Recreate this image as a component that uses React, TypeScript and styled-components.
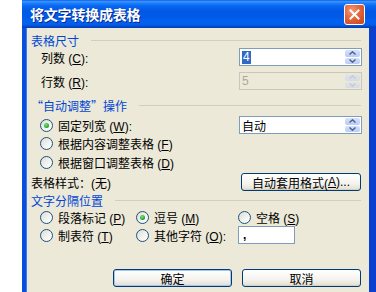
import styled, { createGlobalStyle } from "styled-components";

const GlobalStyle = createGlobalStyle`
  html, body {
    margin: 0;
    padding: 0;
    background: #ffffff;
  }
  body {
    font-family: "Liberation Sans", "Noto Sans CJK SC", sans-serif;
    font-size: 12px;
    color: #000000;
  }
`;

const Window = styled.div`
  margin-left: 22px;
  width: 354px;
  height: 292px;
  display: flex;
  flex-direction: column;
  overflow: hidden;
`;

const TitleBar = styled.div`
  flex: none;
  height: 28px;
  display: flex;
  align-items: center;
  justify-content: space-between;
  padding: 0 11px 0 8px;
  background: linear-gradient(
    180deg,
    #0a5fe6 0%,
    #3d95ff 6%,
    #1a7dfb 12%,
    #0866f0 22%,
    #0058e6 40%,
    #005ae8 60%,
    #0462f0 78%,
    #035de8 88%,
    #0048c8 96%,
    #0038a8 100%
  );
`;

const Title = styled.span`
  font-family: "Noto Sans CJK SC", sans-serif;
  font-size: 14px;
  font-weight: 700;
  color: #ffffff;
  text-shadow: 1px 1px 0 #0a2a8a;
  letter-spacing: -0.2px;
`;

const CloseButton = styled.div`
  width: 21px;
  height: 21px;
  box-sizing: border-box;
  border: 1px solid #ffffff;
  border-radius: 3px;
  background: radial-gradient(circle at 35% 30%, #f39a78 0%, #e4643c 45%, #c8431a 100%);
  display: flex;
  align-items: center;
  justify-content: center;
`;

const Body = styled.div`
  flex: 1;
  background: #ece9d8;
  border-left: 4px solid #0a4ee0;
  border-right: 7px solid #0a3fcf;
  box-shadow: inset 1px 0 0 #3d7bf0;
  padding: 4px 7px 0 5px;
  display: flex;
  flex-direction: column;
`;

const GroupHeader = styled.div<{ $mt?: number }>`
  height: 16px;
  margin-top: ${(p) => p.$mt ?? 0}px;
  display: flex;
  align-items: center;
  gap: 12px;
  color: #0046d5;
  white-space: nowrap;

  &::after {
    content: "";
    flex: 1;
    height: 1px;
    background: #d0d0bf;
    margin-right: 1px;
  }
`;

const Cjk = styled.span`
  font-family: "Noto Sans CJK SC", sans-serif;
`;

const Row = styled.div<{ $mt?: number; $h?: number }>`
  height: ${(p) => p.$h ?? 18}px;
  margin-top: ${(p) => p.$mt ?? 0}px;
  display: flex;
  align-items: center;
  justify-content: space-between;
  white-space: nowrap;
`;

const Label = styled.span<{ $indent?: number }>`
  padding-left: ${(p) => p.$indent ?? 0}px;
`;

const Field = styled.div<{ $disabled?: boolean; $w?: number }>`
  width: ${(p) => p.$w ?? 123}px;
  height: 18px;
  box-sizing: border-box;
  border: 1px solid ${(p) => (p.$disabled ? "#c9c7ba" : "#7f9db9")};
  background: ${(p) => (p.$disabled ? "#ece9d8" : "#ffffff")};
  display: flex;
  align-items: center;
  justify-content: space-between;
  padding: 1px 1px 1px 2px;
  color: ${(p) => (p.$disabled ? "#aca899" : "#000000")};
`;

const Selected = styled.span`
  background: #316ac5;
  color: #ffffff;
  padding: 0 1px;
  line-height: 13px;
`;

const Comma = styled.span`
  font-weight: 700;
  padding-left: 2px;
`;

const SpinBox = styled.div<{ $disabled?: boolean }>`
  width: 15px;
  height: 14px;
  display: flex;
  flex-direction: column;
  gap: 1px;
  opacity: ${(p) => (p.$disabled ? 0.45 : 1)};
`;

const SpinHalf = styled.div`
  flex: 1;
  border-radius: 2px;
  background: linear-gradient(180deg, #d6e1fb 0%, #b9cbf6 100%);
  display: flex;
  align-items: center;
  justify-content: center;
`;

const RadioWrap = styled.span<{ $indent?: number }>`
  display: inline-flex;
  align-items: center;
  gap: 5px;
  padding-left: ${(p) => p.$indent ?? 0}px;
`;

const Circle = styled.span<{ $checked?: boolean }>`
  width: 13px;
  height: 13px;
  box-sizing: border-box;
  border-radius: 50%;
  border: 1px solid #1c5180;
  background: linear-gradient(135deg, #dcdcd7 0%, #f4f4f0 60%, #ffffff 100%);
  display: inline-flex;
  align-items: center;
  justify-content: center;

  &::after {
    content: "";
    display: ${(p) => (p.$checked ? "block" : "none")};
    width: 5px;
    height: 5px;
    border-radius: 50%;
    background: radial-gradient(circle at 40% 35%, #7fe07f 0%, #21a121 70%);
  }
`;

const RadioGrid = styled.div<{ $mt?: number }>`
  height: 18px;
  margin-top: ${(p) => p.$mt ?? 0}px;
  padding-left: 9px;
  display: grid;
  grid-template-columns: 96px 102px auto;
  align-items: center;
  white-space: nowrap;
`;

const PushButton = styled.div<{ $w?: number; $default?: boolean }>`
  width: ${(p) => p.$w ?? 119}px;
  height: 18px;
  box-sizing: border-box;
  border: 1px solid #003c74;
  border-radius: 3px;
  background: linear-gradient(180deg, #ffffff 0%, #f4f3ee 60%, #e6e3d8 90%, #d6d0c5 100%);
  box-shadow: ${(p) => (p.$default ? "inset 0 0 0 1px #a8c4f2" : "inset 0 -1px 0 #d6d0c5")};
  display: flex;
  align-items: center;
  justify-content: center;
  white-space: nowrap;
`;

const StyleButton = styled(PushButton)`
  margin-right: 1px;
`;

const ButtonRow = styled.div<{ $mt?: number }>`
  margin-top: ${(p) => p.$mt ?? 0}px;
  display: flex;
  justify-content: flex-end;
  gap: 10px;
  padding-right: 1px;
`;

const U = styled.span`
  text-decoration: underline;
`;

function Chevron({ up, color }: { up?: boolean; color: string }) {
  return (
    <svg width="7" height="4" viewBox="0 0 7 4">
      <path
        d={up ? "M0.5 3.5 L3.5 0.8 L6.5 3.5" : "M0.5 0.5 L3.5 3.2 L6.5 0.5"}
        fill="none"
        stroke={color}
        strokeWidth="1.4"
      />
    </svg>
  );
}

function Spin({ disabled }: { disabled?: boolean }) {
  const c = disabled ? "#9aa6c0" : "#4d6185";
  return (
    <SpinBox $disabled={disabled}>
      <SpinHalf>
        <Chevron up color={c} />
      </SpinHalf>
      <SpinHalf>
        <Chevron color={c} />
      </SpinHalf>
    </SpinBox>
  );
}

function Radio({
  checked,
  indent,
  children,
}: {
  checked?: boolean;
  indent?: number;
  children: React.ReactNode;
}) {
  return (
    <RadioWrap $indent={indent}>
      <Circle $checked={checked} />
      <span>{children}</span>
    </RadioWrap>
  );
}

export default function App() {
  return (
    <>
      <GlobalStyle />
      <Window>
        <TitleBar>
          <Title>将文字转换成表格</Title>
          <CloseButton>
            <svg width="11" height="11" viewBox="0 0 11 11">
              <path d="M1.5 1.5 L9.5 9.5 M9.5 1.5 L1.5 9.5" stroke="#ffffff" strokeWidth="2" strokeLinecap="square" />
            </svg>
          </CloseButton>
        </TitleBar>
        <Body>
          <GroupHeader>表格尺寸</GroupHeader>
          <Row>
            <Label $indent={10}>
              列数 (<U>C</U>):
            </Label>
            <Field>
              <Selected>4</Selected>
              <Spin />
            </Field>
          </Row>
          <Row $mt={6}>
            <Label $indent={10}>
              行数 (<U>R</U>):
            </Label>
            <Field $disabled>
              <span>5</span>
              <Spin disabled />
            </Field>
          </Row>

          <GroupHeader $mt={7}>
            <Cjk>“自动调整”操作</Cjk>
          </GroupHeader>
          <Row $mt={3}>
            <Radio checked indent={9}>
              固定列宽 (<U>W</U>):
            </Radio>
            <Field>
              <span>自动</span>
              <Spin />
            </Field>
          </Row>
          <Row>
            <Radio indent={9}>
              根据内容调整表格 (<U>F</U>)
            </Radio>
          </Row>
          <Row $mt={1}>
            <Radio indent={9}>
              根据窗口调整表格 (<U>D</U>)
            </Radio>
          </Row>
          <Row $mt={2}>
            <Label>表格样式：(无)</Label>
            <StyleButton $w={120}>
              自动套用格式(<U>A</U>)...
            </StyleButton>
          </Row>

          <GroupHeader $mt={1}>文字分隔位置</GroupHeader>
          <RadioGrid>
            <Radio>
              段落标记 (<U>P</U>)
            </Radio>
            <Radio checked>
              逗号 (<U>M</U>)
            </Radio>
            <Radio>
              空格 (<U>S</U>)
            </Radio>
          </RadioGrid>
          <RadioGrid>
            <Radio>
              制表符 (<U>T</U>)
            </Radio>
            <Radio>
              其他字符 (<U>O</U>):
            </Radio>
            <Field $w={57}>
              <Comma>,</Comma>
            </Field>
          </RadioGrid>

          <ButtonRow $mt={25}>
            <PushButton $default>确定</PushButton>
            <PushButton>取消</PushButton>
          </ButtonRow>
        </Body>
      </Window>
    </>
  );
}
